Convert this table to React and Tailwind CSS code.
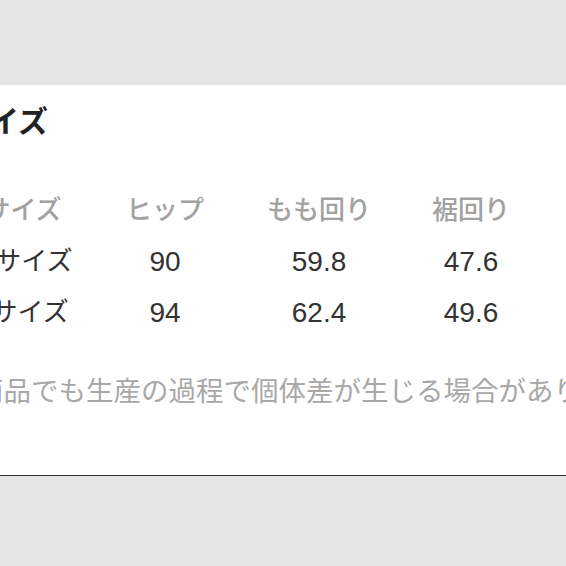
const font = {
  fontFamily: '"Liberation Sans", "Noto Sans CJK JP", sans-serif',
};

const rows = [
  { label: "Mサイズ", hip: "90", thigh: "59.8", hem: "47.6" },
  { label: "Lサイズ", hip: "94", thigh: "62.4", hem: "49.6" },
];

const cols = "grid grid-cols-[158px_126px_182px_122px] h-[51px] items-center text-center";

export default function App() {
  return (
    <div className="min-h-screen bg-[#e4e4e4] pt-[85px] overflow-hidden" style={font}>
      <div className="bg-white h-[391px] border-b border-[#2e2e2e] overflow-hidden">
        {/* title */}
        <h2 className="mt-[22px] ml-[-41px] text-[30px] leading-[30px] font-bold text-[#222] whitespace-nowrap">
          サイズ
        </h2>

        {/* size table */}
        <div className="mt-[48px] ml-[-56px] w-[700px]">
          <div className={`${cols} text-[26px] font-medium text-[#a2a2a2]`}>
            <div>サイズ</div>
            <div>ヒップ</div>
            <div>もも回り</div>
            <div>裾回り</div>
          </div>
          {rows.map((r) => (
            <div key={r.label} className={`${cols} text-[#333]`}>
              <div className="text-[26px]">{r.label}</div>
              <div className="text-[28px]">{r.hip}</div>
              <div className="text-[28px]">{r.thigh}</div>
              <div className="text-[28px]">{r.hem}</div>
            </div>
          ))}
        </div>

        {/* note */}
        <p className="mt-[40px] ml-[-24px] text-[27.5px] leading-[28px] text-[#a8a8a8] whitespace-nowrap">
          商品でも生産の過程で個体差が生じる場合があります。
        </p>
      </div>
    </div>
  );
}
